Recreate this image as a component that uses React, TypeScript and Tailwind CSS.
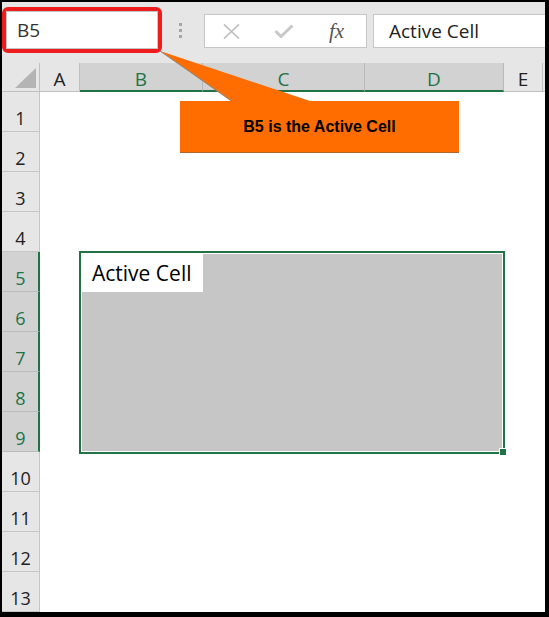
import React from "react";

const columns = [
  { label: "", width: "w-[38px]", selected: false, corner: true },
  { label: "A", width: "w-[40px]", selected: false },
  { label: "B", width: "w-[123px]", selected: true },
  { label: "C", width: "w-[162px]", selected: true },
  { label: "D", width: "w-[139px]", selected: true },
  { label: "E", width: "w-[39px]", selected: false },
];

const rows = [1, 2, 3, 4, 5, 6, 7, 8, 9, 10, 11, 12, 13];

function isSelectedRow(n: number) {
  return n >= 5 && n <= 9;
}

export default function App() {
  return (
    <div className="relative h-[617px] w-[549px] overflow-hidden border-t-2 border-l-2 border-r-4 border-b-[5px] border-black bg-white font-['Open_Sans',sans-serif]">
      {/* Toolbar: name box + formula bar */}
      <div className="flex h-[61px] items-start bg-[#e6e6e6]">
        <div className="relative z-10 mt-[5px] h-[46px] w-[160px] rounded-[6px] border-4 border-[#ee1c1c]">
          <div className="flex h-full items-center border border-[#c6c6c6] bg-white pl-[10px] text-[19px] leading-[24px] text-[#333]">
            B5
          </div>
        </div>

        <div className="ml-[17px] mt-[21px] flex flex-col gap-[3px]">
          <span className="h-[3px] w-[3px] bg-[#a6a6a6]" />
          <span className="h-[3px] w-[3px] bg-[#a6a6a6]" />
          <span className="h-[3px] w-[3px] bg-[#a6a6a6]" />
        </div>

        <div className="ml-[22px] mt-[12px] flex h-[34px] w-[163px] items-center border border-[#c6c6c6] bg-white">
          <div className="flex w-[55px] justify-center">
            <svg width="17" height="15" viewBox="0 0 17 15">
              <path d="M1 0.5 L16 14.5 M16 0.5 L1 14.5" stroke="#bdbdbd" strokeWidth="1.6" fill="none" />
            </svg>
          </div>
          <div className="flex w-[51px] justify-center">
            <svg width="20" height="14" viewBox="0 0 20 14">
              <path d="M1.5 7 L7 12.5 L18.5 1.5" stroke="#c8c8c8" strokeWidth="3" fill="none" />
            </svg>
          </div>
          <div className="flex w-[58px] justify-center pr-[2px] font-['Liberation_Serif',serif] text-[21px] italic leading-[24px] text-[#555]">
            fx
          </div>
        </div>

        <div className="ml-[6px] mt-[12px] flex h-[34px] flex-1 items-center border-y border-l border-[#c6c6c6] bg-white pl-[15px] text-[19px] text-[#222]">
          Active Cell
        </div>
      </div>

      {/* Column headers */}
      <div className="flex h-[29px] bg-[#e6e6e6]">
        {columns.map((col, i) =>
          col.corner ? (
            <div key={i} className={`${col.width} relative border-r border-b border-[#c0c0c0]`}>
              <svg className="absolute right-[3px] bottom-[3px]" width="21" height="20" viewBox="0 0 21 20">
                <polygon points="0,20 21,20 21,0" fill="#b4b4b4" />
              </svg>
            </div>
          ) : col.selected ? (
            <div
              key={i}
              className={`${col.width} flex justify-center border-r border-r-[#b8b8b8] border-b-2 border-b-[#217346] bg-[#d2d2d2] pt-[4px] text-[19px] leading-[24px] text-[#217346]`}
            >
              {col.label}
            </div>
          ) : (
            <div
              key={i}
              className={`${col.width} flex justify-center border-r border-b border-[#c0c0c0] pt-[4px] text-[19px] leading-[24px] text-[#222]`}
            >
              {col.label}
            </div>
          )
        )}
        <div className="flex-1 border-b border-[#c0c0c0]" />
      </div>

      {/* Sheet body */}
      <div className="flex">
        <div className="flex w-[38px] flex-col">
          {rows.map((n) =>
            isSelectedRow(n) ? (
              <div
                key={n}
                className="flex h-[40px] items-end justify-center border-b border-b-[#bcbcbc] border-r-2 border-r-[#217346] bg-[#d2d2d2] pb-[1px] pl-[1px] text-[18px] leading-[24px] text-[#217346]"
              >
                {n}
              </div>
            ) : (
              <div
                key={n}
                className="flex h-[40px] items-end justify-center border-b border-r border-[#c6c6c6] bg-[#e6e6e6] pb-[1px] text-[18px] leading-[24px] text-[#222]"
              >
                {n}
              </div>
            )
          )}
        </div>

        <div className="flex-1">
          {/* B5:D9 selection */}
          <div className="relative ml-[39px] mt-[159px] h-[203px] w-[426px] border-2 border-[#217346] bg-white p-[1px]">
            <div className="h-full w-full bg-[#c6c6c6]">
              <div className="h-[38px] w-[121px] bg-white pl-[10px] pt-[5px] text-[21px] leading-[28px] text-black">
                Active Cell
              </div>
            </div>
            <span className="absolute right-[-4px] bottom-[-4px] h-[8px] w-[8px] border border-white bg-[#217346]" />
          </div>
        </div>
      </div>

      {/* Callout annotation */}
      <svg className="pointer-events-none absolute left-0 top-0 z-[5]" width="543" height="160" viewBox="0 0 543 160">
        <polygon points="158,49 230,100 311,100" fill="#ff6d00" />
        <line x1="158" y1="49" x2="230" y2="99" stroke="#8a8a8a" strokeWidth="1" />
      </svg>
      <div className="absolute left-[178px] top-[99px] z-[5] flex h-[52px] w-[279px] items-center justify-center border-b border-[#b0652a] bg-[#ff6d00] font-['Liberation_Sans',Arial,sans-serif] text-[16px] font-bold text-black">
        B5 is the Active Cell
      </div>
    </div>
  );
}
